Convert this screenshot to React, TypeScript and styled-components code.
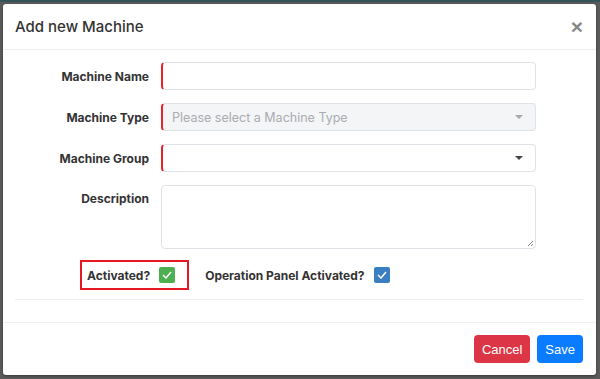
import React from 'react';
import styled, { createGlobalStyle } from 'styled-components';

const GlobalStyle = createGlobalStyle`
    html, body {
        margin: 0;
        padding: 0;
        background: #5b5b5b;
    }
    body {
        font-family: Inter, "Noto Sans", sans-serif;
        color: #333;
    }
`;

const Backdrop = styled.div`
    width: 600px;
    height: 379px;
    box-sizing: border-box;
    padding: 2px 4px 0 3px;
    background: #5b5b5b;
    border-top: 2px solid #35545a;
`;

const Modal = styled.div`
    width: 593px;
    height: 371px;
    background: #fff;
    border-radius: 3px;
    display: flex;
    flex-direction: column;
    box-shadow: 0 1px 3px rgba(0, 0, 0, 0.4);
`;

const Header = styled.div`
    height: 45px;
    display: flex;
    align-items: center;
    justify-content: space-between;
    padding: 0 13px 0 12px;
    border-bottom: 1px solid #eef0f2;
`;

const Title = styled.h4`
    margin: 0;
    font-size: 15px;
    font-weight: 500;
    color: #333;
`;

const Close = styled.span`
    font-family: "Liberation Sans", Arial, sans-serif;
    font-size: 21px;
    font-weight: bold;
    line-height: 1;
    color: #888;
`;

const Body = styled.div`
    flex: 1;
    padding: 12px 13px 0 12px;
`;

const Form = styled.div`
    display: grid;
    grid-template-columns: 134px 375px;
    column-gap: 12px;
    row-gap: 13px;
`;

const Label = styled.label<{ $top?: boolean }>`
    font-size: 12px;
    font-weight: 700;
    color: #333;
    text-align: right;
    align-self: ${(p) => (p.$top ? 'start' : 'center')};
    padding-top: ${(p) => (p.$top ? '6px' : '0')};
`;

const Field = styled.div<{ $required?: boolean; $disabled?: boolean; $height?: number }>`
    position: relative;
    height: ${(p) => p.$height ?? 28}px;
    box-sizing: border-box;
    border: 1px solid #dfe2e6;
    border-left: ${(p) => (p.$required ? '2px solid #e5252a' : '1px solid #dfe2e6')};
    border-radius: 4px;
    background: ${(p) => (p.$disabled ? '#f4f5f7' : '#fff')};
    display: flex;
    align-items: center;
    padding: 0 10px 0 9px;
    font-size: 12.5px;
    color: #a9acb0;
`;

const Caret = styled.span<{ $muted?: boolean }>`
    margin-left: auto;
    width: 0;
    height: 0;
    border-left: 4px solid transparent;
    border-right: 4px solid transparent;
    border-top: 4px solid ${(p) => (p.$muted ? '#a5a8ac' : '#444')};
    margin-right: 2px;
`;

const Grip = styled.svg`
    position: absolute;
    right: 1px;
    bottom: 1px;
`;

const CheckRow = styled.div`
    display: flex;
    align-items: center;
    margin: 11px 0 0 65px;
`;

const Highlight = styled.div`
    display: flex;
    align-items: center;
    height: 30px;
    box-sizing: border-box;
    border: 2px solid #e5191f;
    padding: 0 12px 0 5px;
    gap: 9px;
`;

const CheckLabel = styled.span`
    font-size: 12px;
    font-weight: 700;
    color: #333;
`;

const Check = styled.span<{ $color: string }>`
    width: 16px;
    height: 16px;
    border-radius: 2px;
    background: ${(p) => p.$color};
    display: flex;
    align-items: center;
    justify-content: center;
`;

const Plain = styled.div`
    display: flex;
    align-items: center;
    gap: 9px;
    margin-left: 16px;
`;

const Rule = styled.hr`
    margin: 9px 0 0;
    border: 0;
    border-top: 1px solid #eceef0;
`;

const Footer = styled.div`
    height: 53px;
    box-sizing: border-box;
    border-top: 1px solid #eef0f2;
    display: flex;
    align-items: center;
    justify-content: flex-end;
    gap: 7px;
    padding: 0 13px 0 0;
`;

const Button = styled.button<{ $bg: string }>`
    height: 28px;
    border: 0;
    border-radius: 4px;
    background: ${(p) => p.$bg};
    color: #fff;
    font-family: "Liberation Sans", Arial, sans-serif;
    font-size: 13px;
    padding: 0 8px;
`;

const Tick = () => (
    <svg width="10" height="8" viewBox="0 0 10 8">
        <path d="M1 4 L4 7 L9 1" fill="none" stroke="#fff" strokeWidth="1.5" />
    </svg>
);

export default function App() {
    return (
        <Backdrop>
            <GlobalStyle />
            <Modal>
                <Header>
                    <Title>Add new Machine</Title>
                    <Close>×</Close>
                </Header>
                <Body>
                    <Form>
                        <Label>Machine Name</Label>
                        <Field $required />
                        <Label>Machine Type</Label>
                        <Field $required $disabled>
                            Please select a Machine Type
                            <Caret $muted />
                        </Field>
                        <Label>Machine Group</Label>
                        <Field $required>
                            <Caret />
                        </Field>
                        <Label $top>Description</Label>
                        <Field $height={64}>
                            <Grip width="7" height="7" viewBox="0 0 7 7">
                                <path d="M6 1 L1 6 M6 4 L4 6" stroke="#888" strokeWidth="1" />
                            </Grip>
                        </Field>
                    </Form>
                    <CheckRow>
                        <Highlight>
                            <CheckLabel>Activated?</CheckLabel>
                            <Check $color="#4caf50">
                                <Tick />
                            </Check>
                        </Highlight>
                        <Plain>
                            <CheckLabel>Operation Panel Activated?</CheckLabel>
                            <Check $color="#3a7fc1">
                                <Tick />
                            </Check>
                        </Plain>
                    </CheckRow>
                    <Rule />
                </Body>
                <Footer>
                    <Button $bg="#dc3545">Cancel</Button>
                    <Button $bg="#0a7cff">Save</Button>
                </Footer>
            </Modal>
        </Backdrop>
    );
}
